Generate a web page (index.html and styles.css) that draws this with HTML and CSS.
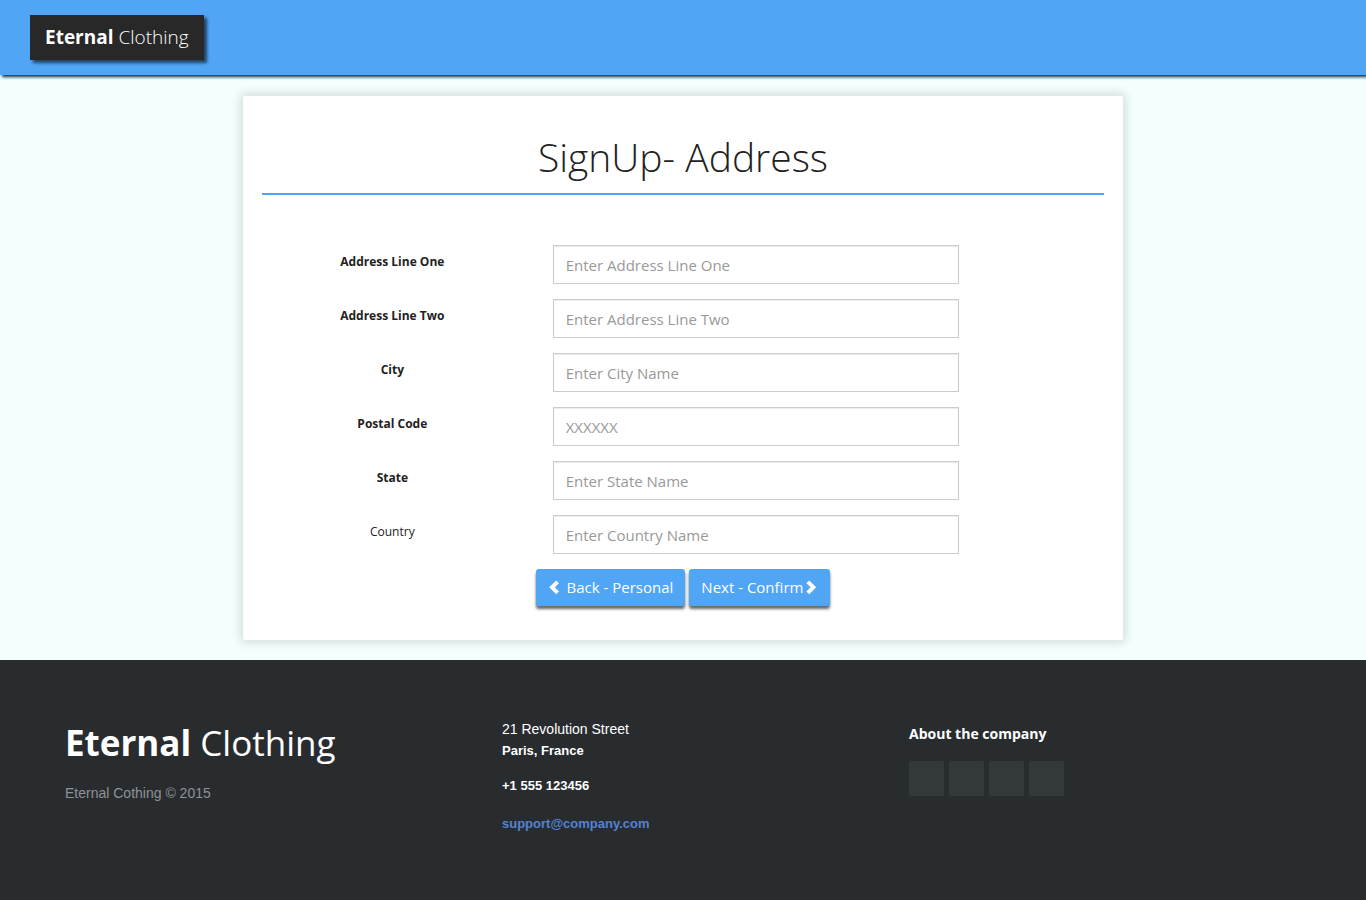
FILE: index.html
```html
<!DOCTYPE html>
<html lang="en">
<head>
<meta charset="utf-8">
<title>Eternal Clothing</title>
<meta name="viewport" content="width=device-width, initial-scale=1">
<link rel="stylesheet" href="styles.css">
</head>
<body>
<header class="topbar">
  <a class="brand" href="#"><b>Eternal</b> Clothing</a>
</header>
<main class="main">
  <form class="card">
    <h1 class="title">SignUp- Address</h1>
    <div class="field"><label class="label" for="line1">Address Line One</label><input class="input" id="line1" type="text" placeholder="Enter Address Line One"></div>
    <div class="field"><label class="label" for="line2">Address Line Two</label><input class="input" id="line2" type="text" placeholder="Enter Address Line Two"></div>
    <div class="field"><label class="label" for="city">City</label><input class="input" id="city" type="text" placeholder="Enter City Name"></div>
    <div class="field"><label class="label" for="postal">Postal Code</label><input class="input" id="postal" type="text" placeholder="XXXXXX"></div>
    <div class="field"><label class="label" for="state">State</label><input class="input" id="state" type="text" placeholder="Enter State Name"></div>
    <div class="field"><label class="label label-light" for="country">Country</label><input class="input" id="country" type="text" placeholder="Enter Country Name"></div>
    <div class="actions">
      <button class="btn btn-back" type="button"><svg class="chevron" viewBox="0 0 15 15" aria-hidden="true"><path d="M8.2 0.4 L11 3.2 L6.8 7.3 L11 11.4 L8.2 14.2 L1.2 7.3 Z"/></svg>Back - Personal</button>
      <button class="btn" type="submit">Next - Confirm<svg class="chevron" viewBox="0 0 15 15" aria-hidden="true"><path d="M6.2 0.4 L3.4 3.2 L7.6 7.3 L3.4 11.4 L6.2 14.2 L13.2 7.3 Z"/></svg></button>
    </div>
  </form>
</main>
<footer class="footer">
  <div class="about">
    <h3 class="footer-logo">Eternal <span class="thin">Clothing</span></h3>
    <p class="copyright">Eternal Cothing © 2015</p>
  </div>
  <div class="contact">
    <p class="address"><span class="street">21 Revolution Street</span><br>Paris, France</p>
    <p class="phone">+1 555 123456</p>
    <p class="mail"><a class="mail-link" href="mailto:support@company.com">support@company.com</a></p>
  </div>
  <div class="company">
    <h4 class="company-title">About the company</h4>
    <div class="social">
      <a class="social-link" href="#" aria-label="Facebook"></a>
      <a class="social-link" href="#" aria-label="Twitter"></a>
      <a class="social-link" href="#" aria-label="LinkedIn"></a>
      <a class="social-link" href="#" aria-label="GitHub"></a>
    </div>
  </div>
</footer>
</body>
</html>
```
FILE: styles.css
```css
* { box-sizing: border-box; }
body {
  margin: 0;
  min-height: 100vh;
  display: flex;
  flex-direction: column;
  background: #f3ffff;
  color: #222;
  font-family: "Open Sans", sans-serif;
}
.topbar {
  display: flex;
  padding: 15px 30px;
  background: #50a5f5;
  box-shadow: 2px 2px 3px #222;
}
.brand {
  padding: 0 15px;
  background: #282828;
  color: #fff;
  font-size: 19px;
  font-weight: 300;
  line-height: 45px;
  text-decoration: none;
  box-shadow: 3px 3px 3px rgba(0, 0, 0, 0.6);
}
.brand b { font-weight: 700; }
.main { padding: 21px 20px 20px; }
.card {
  max-width: 880px;
  margin: 0 auto;
  padding: 31px 19px 34px;
  background: #fff;
  border-radius: 2px;
  box-shadow: 0 0 10px 3px rgba(0, 0, 0, 0.13);
}
.title {
  margin: 0 0 50px;
  padding-bottom: 6px;
  border-bottom: 2px solid #50a5f5;
  font-size: 39px;
  font-weight: 300;
  line-height: 60px;
  text-align: center;
}
.field {
  display: grid;
  grid-template-columns: 4fr 6fr 2fr;
  align-items: start;
  margin: 0 -15px 15px;
}
.label {
  padding: 8px 15px;
  font-size: 12px;
  font-weight: 700;
  line-height: 18px;
  text-align: center;
}
.label-light { font-weight: 400; }
.input {
  min-width: 0;
  height: 39px;
  margin: 0 15px;
  padding: 8px 12px;
  border: 1px solid #ccc;
  border-radius: 0;
  background: #fff;
  box-shadow: inset 0 1px 1px rgba(0, 0, 0, 0.08);
  font: 15px/21px "Open Sans", sans-serif;
}
.input::placeholder { color: #999; }
.actions {
  display: flex;
  flex-wrap: wrap;
  justify-content: center;
  gap: 4px;
}
.btn {
  display: flex;
  align-items: center;
  height: 37px;
  padding: 0 12px;
  border: 0;
  border-radius: 3px;
  background: #50a5f5;
  color: #fff;
  font: 15px/21px "Open Sans", sans-serif;
  box-shadow: 0 3px 3px rgba(0, 0, 0, 0.6);
}
.btn-back { gap: 4px; }
.chevron { width: 15px; height: 15px; fill: #fff; }
.footer {
  flex: 1;
  display: grid;
  grid-template-columns: 437fr 407fr 392fr;
  align-items: start;
  padding: 55px 65px;
  background: #292c2f;
}
.footer-logo {
  margin: 3px 0 12px;
  color: #fff;
  font-family: "Comic Sans MS", "Open Sans", cursive;
  font-size: 35px;
  font-weight: 700;
  line-height: 50px;
}
.thin { font-weight: 400; }
.copyright {
  margin: 0;
  color: #8f9296;
  font: 14px/26px "Liberation Sans", Arial, sans-serif;
}
.contact {
  color: #fff;
  font-family: "Liberation Sans", Arial, sans-serif;
  font-size: 13px;
  font-weight: 700;
}
.address { margin: 4px 0 14px; line-height: 21px; }
.street { font-size: 14px; font-weight: 400; }
.phone { margin: 0 0 17px; line-height: 21px; }
.mail { margin: 0; line-height: 21px; }
.mail-link { color: #5383d3; text-decoration: none; }
.company-title {
  margin: 8px 0 16px;
  color: #fff;
  font-size: 14px;
  font-weight: 700;
  line-height: 22px;
}
.social { display: flex; gap: 5px; }
.social-link {
  width: 35px;
  height: 35px;
  border-radius: 2px;
  background: #33383b;
}
```
